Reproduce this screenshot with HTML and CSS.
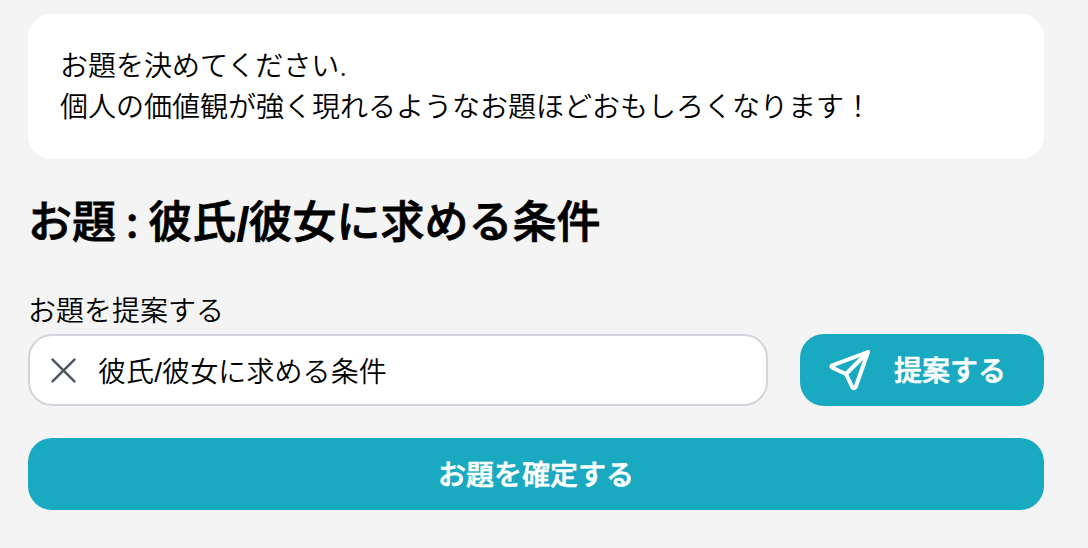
FILE: index.html
```html
<!DOCTYPE html>
<html lang="ja">
<head>
    <meta charset="UTF-8">
    <meta name="viewport" content="width=device-width, initial-scale=1.0">
    <title>お題</title>
    <link rel="stylesheet" href="styles.css">
</head>
<body>
    <main class="page">
        <div class="card">
            <p>お題を決めてください.</p>
            <p>個人の価値観が強く現れるようなお題ほどおもしろくなります！</p>
        </div>
        <h1 class="title">お題 : 彼氏<span class="slash">/</span>彼女に求める条件</h1>
        <label class="label" for="topic">お題を提案する</label>
        <form class="form">
            <div class="input-box">
                <svg class="clear-icon" viewBox="0 0 24 24">
                    <path d="M1.5 1.5L22.5 22.5M22.5 1.5L1.5 22.5" />
                </svg>
                <input id="topic" type="text" value="彼氏/彼女に求める条件">
            </div>
            <button type="button" class="button send">
                <svg class="send-icon" viewBox="0 0 42 42">
                    <path d="M39 3L3.4 16.4Q1.2 17.5 3.4 18.7L17 25L23.2 38Q25 40.6 26.7 38Z" />
                    <path d="M39 3L17 25" />
                </svg>
                <span>提案する</span>
            </button>
        </form>
        <button type="button" class="button confirm">お題を確定する</button>
    </main>
</body>
</html>
```

FILE: styles.css
```css
* {
    box-sizing: border-box;
}
body {
    margin: 0;
    background-color: #f4f4f4;
    color: #000;
    font-family: Inter, "Noto Sans CJK JP", sans-serif;
    font-size: 28px;
    font-weight: 350;
}
.page {
    padding: 14px 44px 0 28px;
}
.card {
    height: 145px;
    padding: 32px 32px 31px;
    background-color: #fff;
    border-radius: 24px;
}
.card p {
    margin: 0;
    line-height: 41px;
}
.title {
    height: 66px;
    margin: 30px 0 0;
    font-size: 44px;
    line-height: 66px;
    font-weight: 500;
    word-spacing: -2.3px;
    -webkit-text-stroke: 0.8px #000;
}
.slash {
    font-family: "Liberation Sans", sans-serif;
    font-size: 48px;
    font-weight: 700;
    line-height: 0;
    letter-spacing: -1px;
    vertical-align: -3px;
    -webkit-text-stroke: 0;
}
.label {
    display: block;
    margin-top: 35px;
    line-height: 42px;
}
.form {
    display: flex;
    gap: 32px;
    margin: 2px 0 0;
}
.input-box {
    display: flex;
    flex: 1;
    align-items: center;
    gap: 22px;
    height: 72px;
    padding: 0 22px 0 21px;
    background-color: #fff;
    border: 2px solid #d1d5db;
    border-radius: 24px;
}
.input-box input {
    flex: 1;
    min-width: 0;
    padding: 0 0 1px;
    border: none;
    outline: none;
    background: none;
    color: #000;
    font: inherit;
    font-family: "Liberation Sans", "Noto Sans CJK JP", sans-serif;
    letter-spacing: 0.1px;
}
.clear-icon {
    width: 25px;
    height: 25px;
    fill: none;
    stroke: #4b5563;
    stroke-width: 2.4;
    stroke-linecap: round;
}
.button {
    height: 72px;
    padding: 0 0 3px;
    border: none;
    border-radius: 24px;
    background-color: #19a9c0;
    color: #fff;
    font-family: inherit;
    font-size: 28px;
    font-weight: 500;
    -webkit-text-stroke: 0.6px #fff;
    cursor: pointer;
}
.send {
    display: flex;
    align-items: center;
    gap: 23px;
    width: 244px;
    padding: 0 29px;
}
.send span {
    padding-bottom: 3px;
}
.send-icon {
    width: 42px;
    height: 42px;
    fill: none;
    stroke: #fff;
    stroke-width: 4;
    stroke-linecap: round;
    stroke-linejoin: round;
}
.confirm {
    display: block;
    width: 100%;
    margin-top: 32px;
}
```
